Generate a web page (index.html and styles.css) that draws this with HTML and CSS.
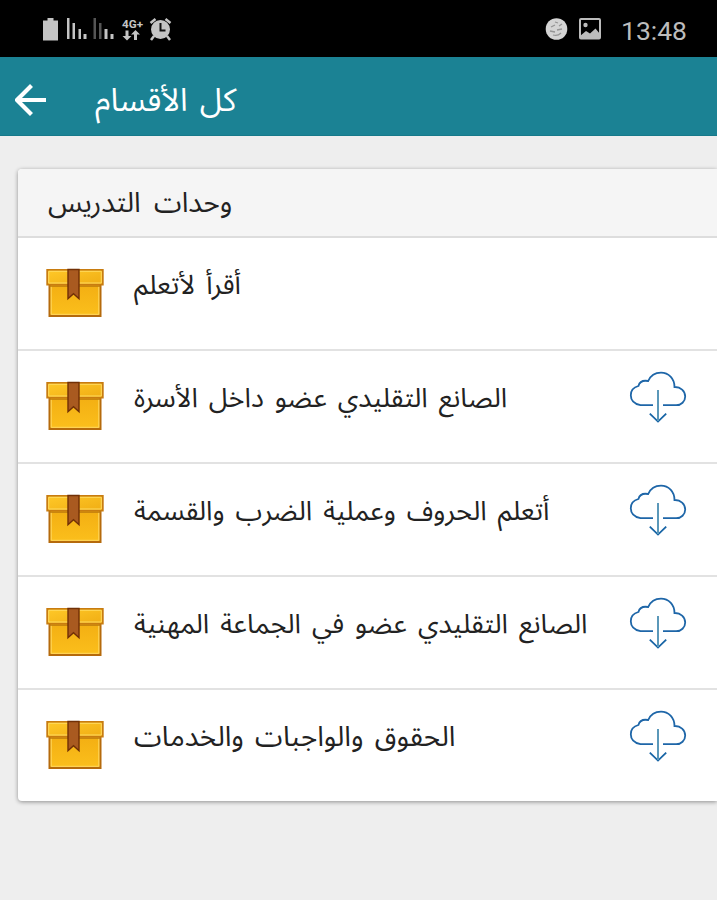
FILE: index.html
```html
<!DOCTYPE html>
<html lang="ar">
<head>
<meta charset="utf-8">
<title>كل الأقسام</title>
<link rel="stylesheet" href="styles.css">
</head>
<body>
<svg class="defs" width="0" height="0">
  <defs>
    <linearGradient id="gold" x1="0" y1="0" x2="0" y2="1"><stop offset="0" stop-color="#f3ae12"/><stop offset="1" stop-color="#fbbf1c"/></linearGradient>
    <linearGradient id="lid" x1="0" y1="0" x2="1" y2="1"><stop offset="0" stop-color="#ffc928"/><stop offset="1" stop-color="#f0ad14"/></linearGradient>
    <symbol id="box" viewBox="0 0 58 50">
      <path d="M3.500 15h51v33h-51z" fill="url(#gold)" stroke="#b56a0c" stroke-width="2"/>
      <path d="M5.200 18v28.300h47.600V18" fill="none" stroke="#ffd862"/>
      <path d="M1.200 1.800h55.600v14.800H1.200z" fill="url(#lid)" stroke="#c87c10" stroke-width="1.800"/>
      <path d="M2.700 15V3.300h52.600V15z" fill="none" stroke="#ffdb60"/>
      <path d="M3 18.200h52" stroke="#bd780c" stroke-width="1.200"/>
      <path d="M22 1.500h11v29.200L27.500 25.800 22 30.700z" fill="#a95a20" stroke="#713006" stroke-width="1.400"/>
    </symbol>
    <symbol id="cloud" viewBox="0 0 58 54">
      <g fill="none" stroke="#1e66a8" stroke-width="1.800">
        <path d="M24 34.200H11.500C5.500 33 1.800 29.500 1.800 24.300c0-4.800 3.200-8.200 7.600-9.300 1-3.700 4.300-6 9.800-5C21.500 4.600 26.500 1.600 32 1.600c7.600 0 13.500 6 13.500 14.400 6-.3 10.700 4 10.700 9.500 0 5-4 8.700-9 8.700H34"/>
        <path d="M20.800 42.600l8.200 8 8.200-8" stroke="#1764a5"/>
        <path d="M29 19v31" stroke="#5b98b9" stroke-width="2"/>
      </g>
    </symbol>
  </defs>
</svg>
<header class="status">
  <svg class="status-left" width="132" height="24" viewBox="0 0 132 24">
    <g fill="#c4c4c4">
      <path d="M6.500 0h6v2.500H17v20H2V2.500h4.500z"/>
      <path d="M26 0h2.500v21H26zM31.500 5H34v16h-2.500zM37.500 11H40v10h-2.500zM42.500 16h3v5h-3z"/>
      <path d="M63.500 11h3v10h-3zM69.500 16h3v5h-3z"/>
      <path d="M52.500 0H55v21h-2.500zM58 5h2.500v16H58z" fill="#555"/>
      <path d="M84.500 12.500h3V18h3L86 22.500 81.500 18h3zM93 22h3v-5.500h3L94.500 12 90 16.500h3z"/>
    </g>
    <text class="network" x="81" y="9.500" textLength="21" lengthAdjust="spacingAndGlyphs">4G+</text>
    <circle cx="119.500" cy="11.500" r="9.500" fill="#c4c4c4"/>
    <path d="M109.500 5l5-4M129.500 5l-5-4M113 18l-3 4M126 18l3 4" stroke="#c4c4c4" stroke-width="2.500" fill="none"/>
    <path d="M119.500 5v7.500h5" stroke="#111" stroke-width="2" fill="none"/>
  </svg>
  <div class="status-right">
    <svg width="56" height="24" viewBox="0 0 56 24">
      <circle cx="11.500" cy="11" r="10.800" fill="#d4d4d4"/>
      <path d="M6 9l4-2M14 8l3-2M5 13l5 1M12 12l5-1M8 17c3 1 6 0 8-2M10 4l3 1" stroke="#949494" stroke-width="1.300" fill="none"/>
      <rect x="35" y="1" width="20" height="19.500" rx="1" fill="none" stroke="#bcbcbc" stroke-width="2"/>
      <path d="M35 18l6-5 4 2.500 5.500-5L55 16v4.500H35z" fill="#bcbcbc"/><circle cx="40.500" cy="7" r="2.200" fill="#bcbcbc"/>
    </svg>
    <span class="clock">13:48</span>
  </div>
</header>
<nav class="bar">
  <svg width="32" height="32" viewBox="0 0 32 32"><path d="M31 16H2M16.500 1.500L2 16l14.500 14.500" fill="none" stroke="#fff" stroke-width="4.200"/></svg>
  <h1 class="bar-title">كل الأقسام</h1>
</nav>
<main class="card">
  <h2 class="card-title">وحدات التدريس</h2>
  <ul class="list">
    <li class="row"><svg class="box"><use href="#box"/></svg><span class="name">أقرأ لأتعلم</span></li>
    <li class="row"><svg class="box"><use href="#box"/></svg><span class="name">الصانع التقليدي عضو داخل الأسرة</span><svg class="cloud"><use href="#cloud"/></svg></li>
    <li class="row"><svg class="box"><use href="#box"/></svg><span class="name">أتعلم الحروف وعملية الضرب والقسمة</span><svg class="cloud"><use href="#cloud"/></svg></li>
    <li class="row"><svg class="box"><use href="#box"/></svg><span class="name">الصانع التقليدي عضو في الجماعة المهنية</span><svg class="cloud"><use href="#cloud"/></svg></li>
    <li class="row"><svg class="box"><use href="#box"/></svg><span class="name wide">الحقوق والواجبات والخدمات</span><svg class="cloud"><use href="#cloud"/></svg></li>
  </ul>
</main>
</body>
</html>
```
FILE: styles.css
```css
* { box-sizing: border-box; }
body { margin: 0; height: 900px; background: #eee; overflow: hidden; font-family: "Noto Sans Arabic", sans-serif; color: #222; }
.defs { display: block; }
.status { height: 57px; background: #000; display: flex; justify-content: space-between; align-items: flex-start; padding: 18px 30px 0 41px; }
.status-left { overflow: visible; }
.network { font: bold 11px Roboto, sans-serif; fill: #c4c4c4; }
.status-right { display: flex; gap: 20px; }
.clock { font: 26.500px/26px Roboto, sans-serif; color: #bcbcbc; }
.bar { height: 79px; background: #1b8294; border-bottom: 1px solid #16798a; display: flex; align-items: center; padding: 7px 15px 0; gap: 48px; }
.bar-title { margin: 3px 0 0; font-size: 32px; line-height: 60px; font-weight: 400; color: #fff; white-space: nowrap; word-spacing: 4px; }
.card { margin: 33px 0 0 18px; height: 632px; background: #fff; border-radius: 4px 0 0 4px; box-shadow: 0 1px 4px rgba(0,0,0,.4); overflow: visible; }
.card-title { margin: 0; height: 69px; padding-left: 30px; background: #f5f5f5; border-bottom: 2px solid #ddd; border-radius: 4px 0 0; font-size: 28px; font-weight: 400; line-height: 70px; word-spacing: 6px; }
.list { margin: 0; padding: 0; list-style: none; }
.row { height: 113px; display: flex; align-items: flex-start; padding: 0 30px 0 28px; border-bottom: 2px solid #e2e2e2; }
.row:last-child { border-bottom: 0; }
.box { width: 58px; height: 50px; margin-top: 30px; flex: none; }
.name { flex: 1; margin: 18px 0 0 30px; font-size: 27px; line-height: 60px; font-weight: 400; white-space: nowrap; word-spacing: 4px; }
.wide { font-size: 28px; }
.cloud { width: 58px; height: 54px; margin-top: 20px; flex: none; }
```
